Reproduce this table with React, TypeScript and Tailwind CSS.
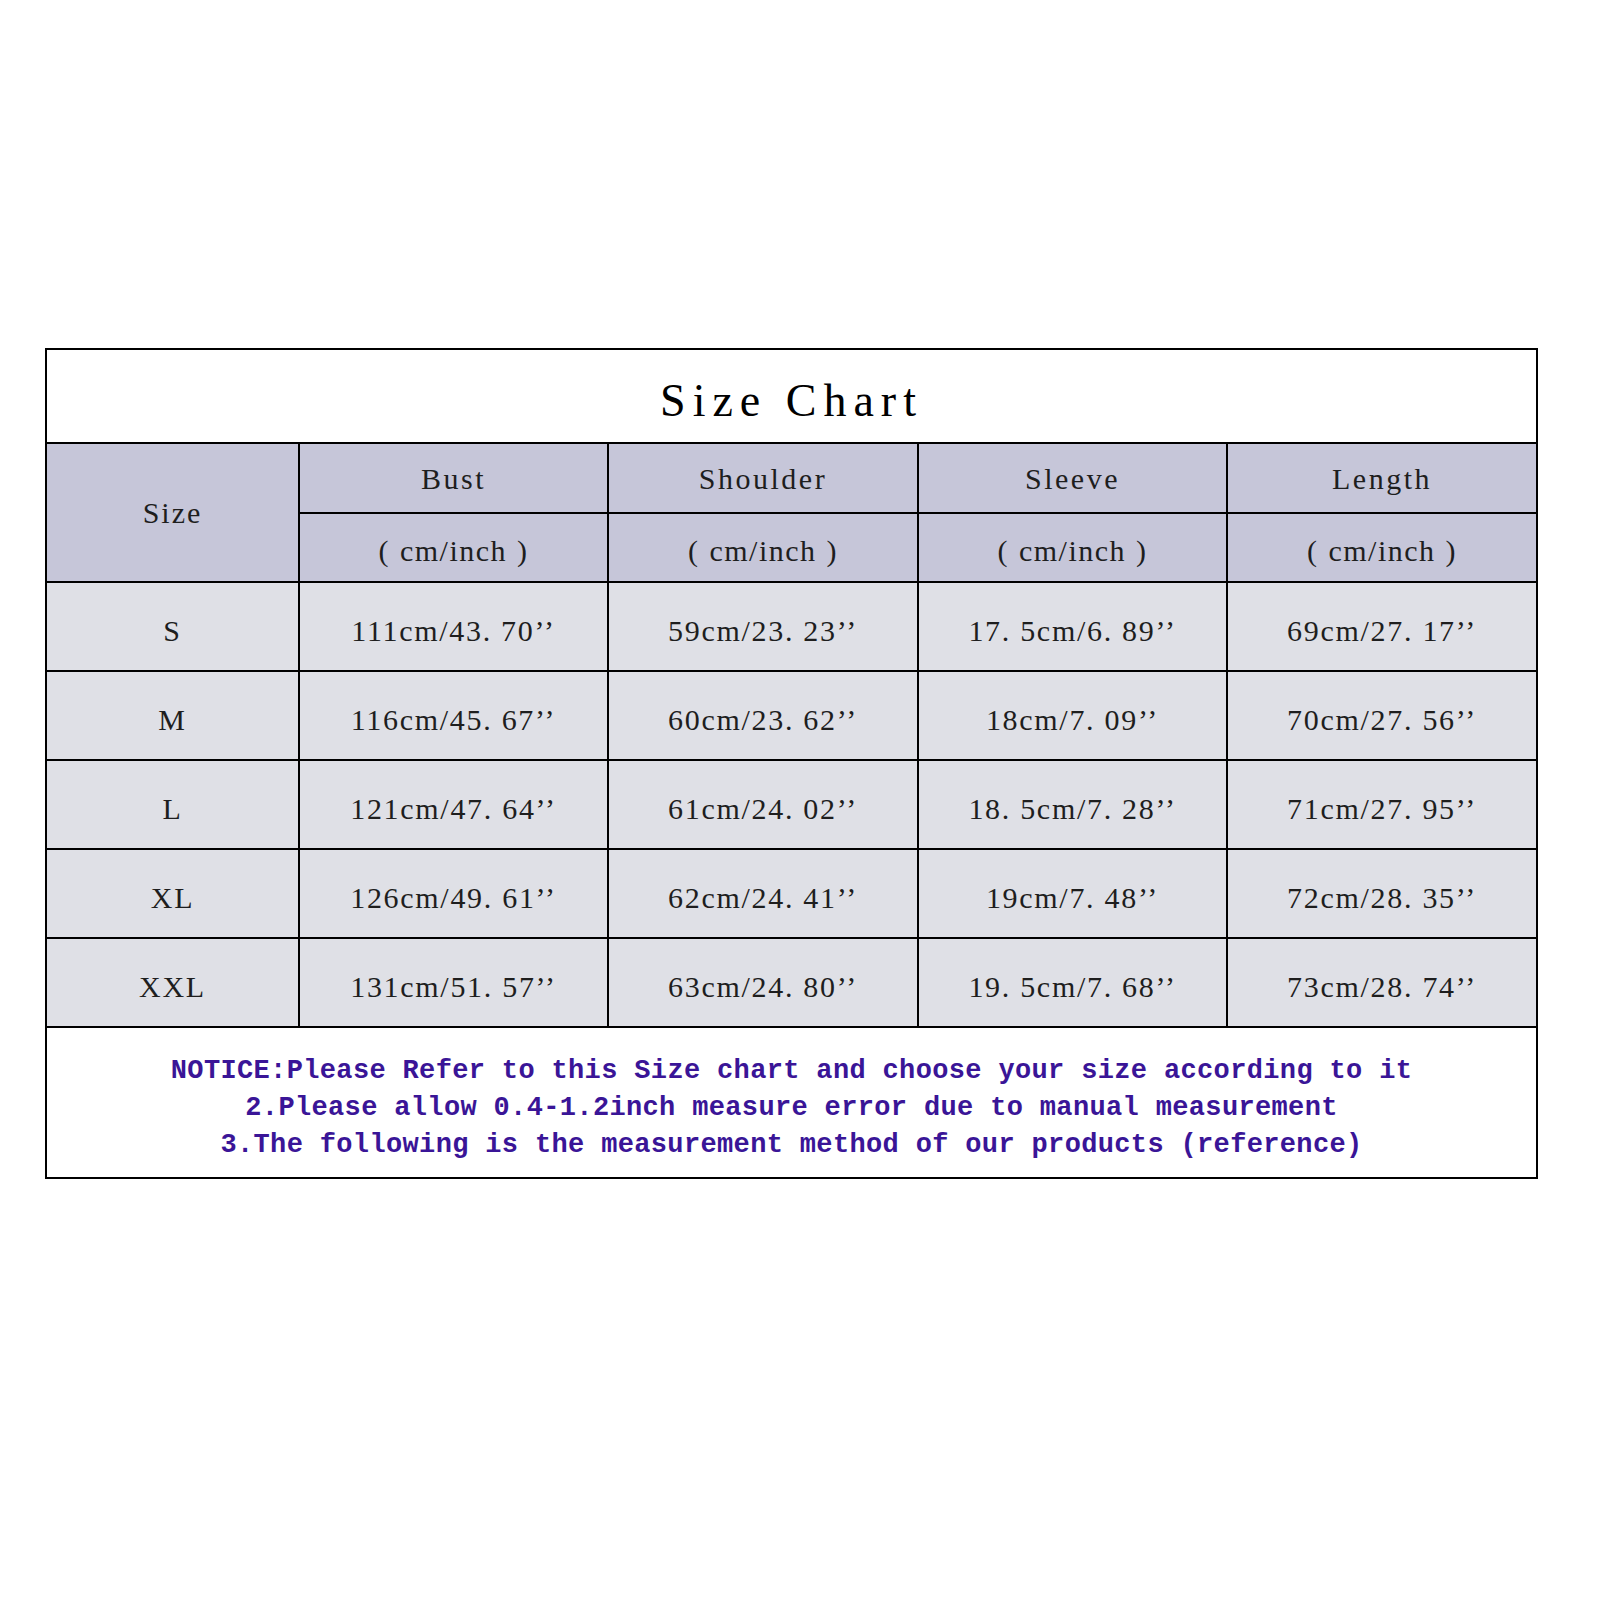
import React from "react";

const rows: [string, string, string, string, string][] = [
  ["S", "111cm/43. 70’’", "59cm/23. 23’’", "17. 5cm/6. 89’’", "69cm/27. 17’’"],
  ["M", "116cm/45. 67’’", "60cm/23. 62’’", "18cm/7. 09’’", "70cm/27. 56’’"],
  ["L", "121cm/47. 64’’", "61cm/24. 02’’", "18. 5cm/7. 28’’", "71cm/27. 95’’"],
  ["XL", "126cm/49. 61’’", "62cm/24. 41’’", "19cm/7. 48’’", "72cm/28. 35’’"],
  ["XXL", "131cm/51. 57’’", "63cm/24. 80’’", "19. 5cm/7. 68’’", "73cm/28. 74’’"],
];

const serif = "font-['Liberation_Serif','Noto_Sans_CJK_SC',serif]";

export default function App() {
  return (
    <div className="w-[1600px] h-[1600px] bg-white pt-[348px] pl-[45px]">
      <table
        className={`table-fixed border-collapse w-[1491px] ${serif} text-[30px] text-[#1e1e1e]`}
      >
        <colgroup>
          <col className="w-[253px]" />
          <col className="w-[309px]" />
          <col className="w-[310px]" />
          <col className="w-[309px]" />
          <col className="w-[310px]" />
        </colgroup>
        <tbody>
          <tr className="h-[94px]">
            <td
              colSpan={5}
              className="border-2 border-black bg-white text-center text-[46px] tracking-[7px] text-black pt-[8px]"
            >
              Size Chart
            </td>
          </tr>
          <tr className="h-[70px] bg-[#c6c6d9]">
            <td
              rowSpan={2}
              className="border-2 border-black text-center tracking-[2px]"
            >
              Size
            </td>
            {["Bust", "Shoulder", "Sleeve", "Length"].map((h) => (
              <td
                key={h}
                className="border-2 border-black text-center tracking-[2.5px]"
              >
                {h}
              </td>
            ))}
          </tr>
          <tr className="h-[69px] bg-[#c6c6d9]">
            {[0, 1, 2, 3].map((i) => (
              <td
                key={i}
                className="border-2 border-black text-center tracking-[1.5px] pt-[6px]"
              >
                <span className="mr-[10px]">(</span>cm/inch<span className="ml-[10px]">)</span>
              </td>
            ))}
          </tr>
          {rows.map((r) => (
            <tr key={r[0]} className="h-[89px] bg-[#dfe0e6]">
              {r.map((c, i) => (
                <td
                  key={i}
                  className="border-2 border-black text-center tracking-[1.7px] pt-[8px]"
                >
                  {c}
                </td>
              ))}
            </tr>
          ))}
          <tr className="h-[151px]">
            <td
              colSpan={5}
              className="border-2 border-black bg-white text-center font-['Liberation_Mono',monospace] font-bold text-[27px] tracking-[0.35px] leading-[37px] text-[#3a1597] pt-[12px]"
            >
              <div>NOTICE:Please Refer to this Size chart and choose your size according to it</div>
              <div>2.Please allow 0.4-1.2inch measure error due to manual measurement</div>
              <div>3.The following is the measurement method of our products (reference)</div>
            </td>
          </tr>
        </tbody>
      </table>
    </div>
  );
}
